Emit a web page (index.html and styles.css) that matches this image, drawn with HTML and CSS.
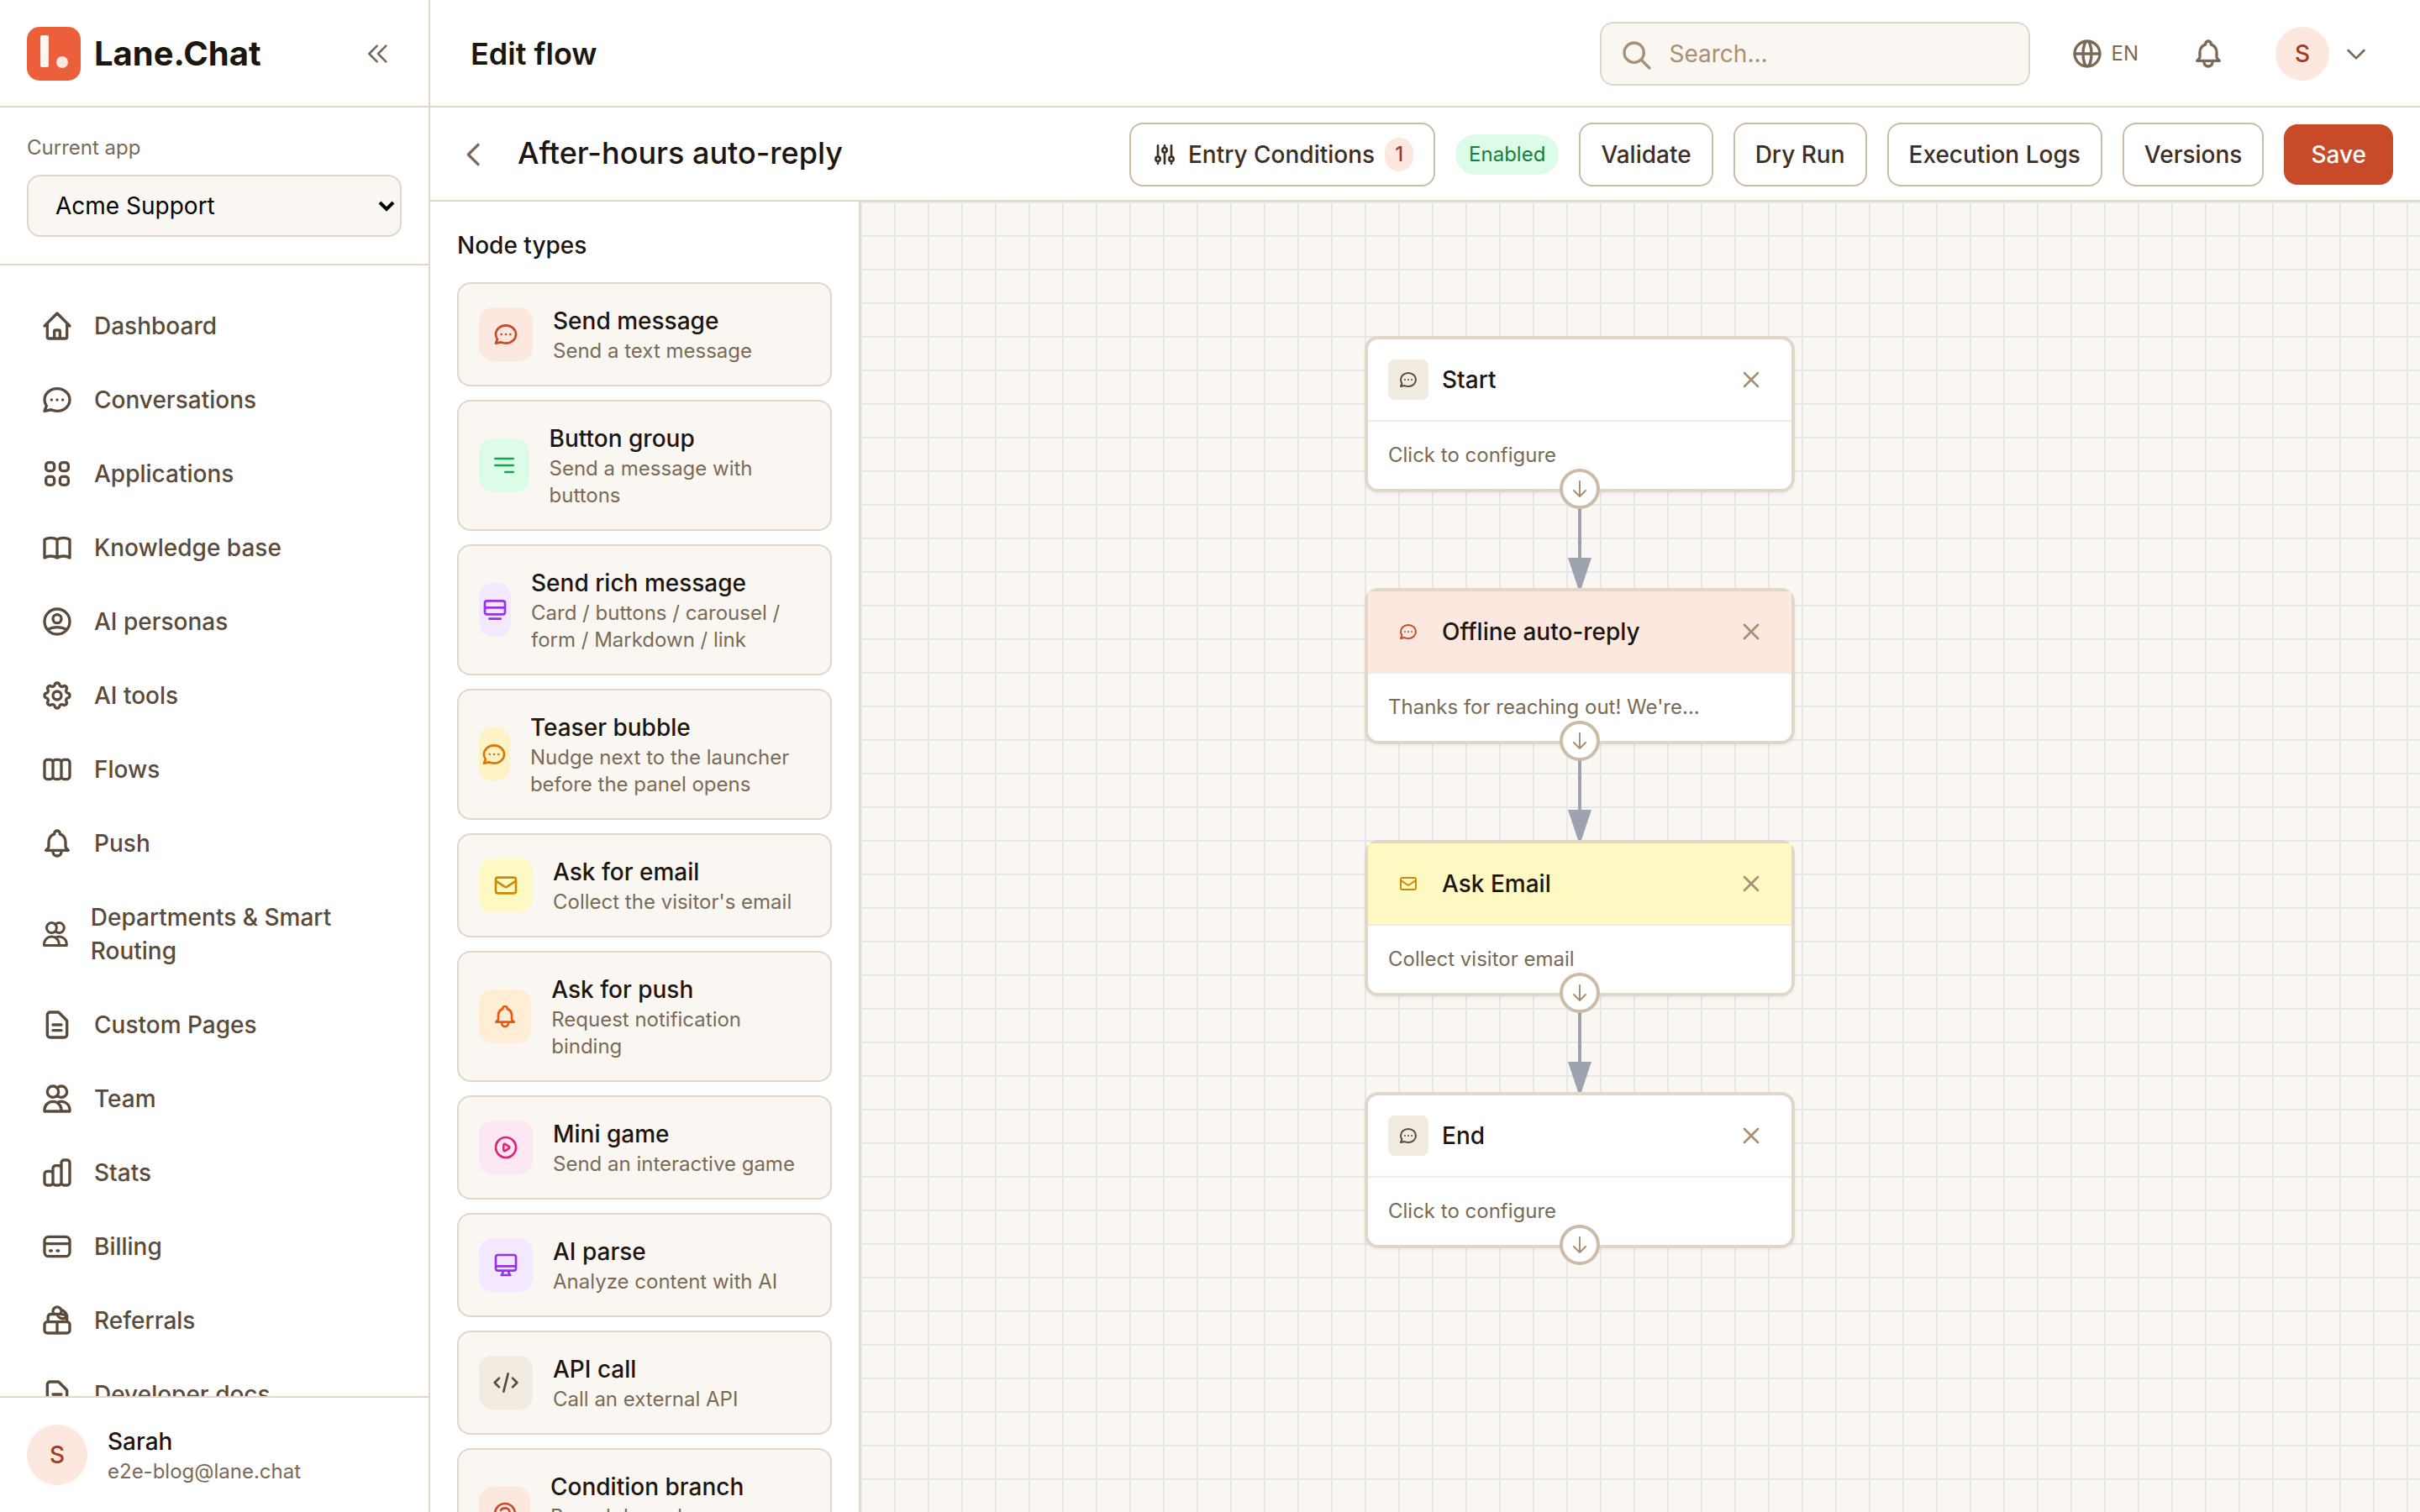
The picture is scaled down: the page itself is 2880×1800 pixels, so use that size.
FILE: index.html
```html
<!DOCTYPE html>
<html lang="en">
<head>
<meta charset="utf-8">
<title>Edit flow - Lane.Chat</title>
<link rel="stylesheet" href="styles.css">
</head>
<body>
<svg class="sprite" aria-hidden="true">
  <symbol id="home" viewBox="0 0 24 24"><path d="M3 12l2-2m0 0l7-7 7 7M5 10v10a1 1 0 001 1h3m10-11l2 2m-2-2v10a1 1 0 01-1 1h-3m-6 0a1 1 0 001-1v-4a1 1 0 011-1h2a1 1 0 011 1v4a1 1 0 001 1m-6 0h6"/></symbol>
  <symbol id="chat" viewBox="0 0 24 24"><path d="M8 12h.01M12 12h.01M16 12h.01M21 12c0 4.418-4.03 8-9 8a9.863 9.863 0 01-4.255-.949L3 20l1.395-3.72C3.512 15.042 3 13.574 3 12c0-4.418 4.03-8 9-8s9 3.582 9 8z"/></symbol>
  <symbol id="grid" viewBox="0 0 24 24"><path d="M4 6a2 2 0 012-2h2a2 2 0 012 2v2a2 2 0 01-2 2H6a2 2 0 01-2-2V6zM14 6a2 2 0 012-2h2a2 2 0 012 2v2a2 2 0 01-2 2h-2a2 2 0 01-2-2V6zM4 16a2 2 0 012-2h2a2 2 0 012 2v2a2 2 0 01-2 2H6a2 2 0 01-2-2v-2zM14 16a2 2 0 012-2h2a2 2 0 012 2v2a2 2 0 01-2 2h-2a2 2 0 01-2-2v-2z"/></symbol>
  <symbol id="book" viewBox="0 0 24 24"><path d="M12 6.253v13m0-13C10.832 5.477 9.246 5 7.5 5S4.168 5.477 3 6.253v13C4.168 18.477 5.754 18 7.5 18s3.332.477 4.5 1.253m0-13C13.168 5.477 14.754 5 16.5 5c1.747 0 3.332.477 4.5 1.253v13C19.832 18.477 18.247 18 16.5 18c-1.746 0-3.332.477-4.5 1.253"/></symbol>
  <symbol id="persona" viewBox="0 0 24 24"><path d="M5.121 17.804A13.937 13.937 0 0112 16c2.5 0 4.847.655 6.879 1.804M15 10a3 3 0 11-6 0 3 3 0 016 0zm6 2a9 9 0 11-18 0 9 9 0 0118 0z"/></symbol>
  <symbol id="cog" viewBox="0 0 24 24"><path d="M10.325 4.317c.426-1.756 2.924-1.756 3.35 0a1.724 1.724 0 002.573 1.066c1.543-.94 3.31.826 2.37 2.37a1.724 1.724 0 001.065 2.572c1.756.426 1.756 2.924 0 3.35a1.724 1.724 0 00-1.066 2.573c.94 1.543-.826 3.31-2.37 2.37a1.724 1.724 0 00-2.572 1.065c-.426 1.756-2.924 1.756-3.35 0a1.724 1.724 0 00-2.573-1.066c-1.543.94-3.31-.826-2.37-2.37a1.724 1.724 0 00-1.065-2.572c-1.756-.426-1.756-2.924 0-3.35a1.724 1.724 0 001.066-2.573c-.94-1.543.826-3.31 2.37-2.37.996.608 2.296.07 2.572-1.065zM15 12a3 3 0 11-6 0 3 3 0 016 0z"/></symbol>
  <symbol id="boards" viewBox="0 0 24 24"><path d="M9 17V7m0 10a2 2 0 01-2 2H5a2 2 0 01-2-2V7a2 2 0 012-2h2a2 2 0 012 2m0 10a2 2 0 002 2h2a2 2 0 002-2M9 7a2 2 0 012-2h2a2 2 0 012 2m0 10V7m0 10a2 2 0 002 2h2a2 2 0 002-2V7a2 2 0 00-2-2h-2a2 2 0 00-2 2"/></symbol>
  <symbol id="bell" viewBox="0 0 24 24"><path d="M15 17h5l-1.405-1.405A2.032 2.032 0 0118 14.158V11a6.002 6.002 0 00-4-5.659V5a2 2 0 10-4 0v.341C7.67 6.165 6 8.388 6 11v3.159c0 .538-.214 1.055-.595 1.436L4 17h5m6 0v1a3 3 0 11-6 0v-1m6 0H9"/></symbol>
  <symbol id="users" viewBox="0 0 24 24"><path d="M12 4.354a4 4 0 110 5.292M15 21H3v-1a6 6 0 0112 0v1zm0 0h6v-1a6 6 0 00-9-5.197M13 7a4 4 0 11-8 0 4 4 0 018 0z"/></symbol>
  <symbol id="doc" viewBox="0 0 24 24"><path d="M9 12h6m-6 4h6m2 5H7a2 2 0 01-2-2V5a2 2 0 012-2h5.586a1 1 0 01.707.293l5.414 5.414a1 1 0 01.293.707V19a2 2 0 01-2 2z"/></symbol>
  <symbol id="bars" viewBox="0 0 24 24"><path d="M9 19v-6a2 2 0 00-2-2H5a2 2 0 00-2 2v6a2 2 0 002 2h2a2 2 0 002-2zm0 0V9a2 2 0 012-2h2a2 2 0 012 2v10m-6 0a2 2 0 002 2h2a2 2 0 002-2m0 0V5a2 2 0 012-2h2a2 2 0 012 2v14a2 2 0 01-2 2h-2a2 2 0 01-2-2z"/></symbol>
  <symbol id="card" viewBox="0 0 24 24"><path d="M3 10h18M7 15h1m4 0h1m-7 4h12a3 3 0 003-3V8a3 3 0 00-3-3H6a3 3 0 00-3 3v8a3 3 0 003 3z"/></symbol>
  <symbol id="gift" viewBox="0 0 24 24"><path d="M12 13v8M5 13h14a2 2 0 012 2v4a2 2 0 01-2 2H5a2 2 0 01-2-2v-4a2 2 0 012-2zM5.500 13V9.500a2 2 0 012-2h4.500M9.500 7A3 3 0 1114.500 7M14.800 4.300C17 5 19 7 19 9v4M12 7.500c1.500 4 6 4 7 1.300-2-1.300-4.500-1.600-7-1.300z"/></symbol>
  <symbol id="lines" viewBox="0 0 24 24"><path d="M4 6h16M4 12h16m-7 6h7"/></symbol>
  <symbol id="rich" viewBox="0 0 24 24"><path d="M3 10h18M5 4h14a2 2 0 012 2v8a2 2 0 01-2 2H5a2 2 0 01-2-2V6a2 2 0 012-2zM7 20h10"/></symbol>
  <symbol id="mail" viewBox="0 0 24 24"><path d="M3 8l7.890 5.260a2 2 0 002.220 0L21 8M5 19h14a2 2 0 002-2V7a2 2 0 00-2-2H5a2 2 0 00-2 2v10a2 2 0 002 2z"/></symbol>
  <symbol id="play" viewBox="0 0 24 24"><path d="M14.752 11.168l-3.197-2.132A1 1 0 0010 9.870v4.263a1 1 0 001.555.832l3.197-2.132a1 1 0 000-1.664zM21 12a9 9 0 11-18 0 9 9 0 0118 0z"/></symbol>
  <symbol id="monitor" viewBox="0 0 24 24"><path d="M9.750 17L9 20l-1 1h8l-1-1-.750-3M3 13h18M5 17h14a2 2 0 002-2V5a2 2 0 00-2-2H5a2 2 0 00-2 2v10a2 2 0 002 2z"/></symbol>
  <symbol id="code" viewBox="0 0 24 24"><path d="M10 20l4-16m4 4l4 4-4 4M6 16l-4-4 4-4"/></symbol>
  <symbol id="question" viewBox="0 0 24 24"><path d="M8.228 9c.549-1.165 2.030-2 3.772-2 2.210 0 4 1.343 4 3 0 1.400-1.278 2.575-3.006 2.907-.542.104-.994.540-.994 1.093m0 3h.01M21 12a9 9 0 11-18 0 9 9 0 0118 0z"/></symbol>
  <symbol id="search" viewBox="0 0 24 24"><path d="M21 21l-6-6m2-5a7 7 0 11-14 0 7 7 0 0114 0z"/></symbol>
  <symbol id="globe" viewBox="0 0 24 24"><path d="M21 12a9 9 0 01-9 9m9-9a9 9 0 00-9-9m9 9H3m9 9a9 9 0 01-9-9m9 9c1.657 0 3-4.030 3-9s-1.343-9-3-9m0 18c-1.657 0-3-4.030-3-9s1.343-9 3-9m-9 9a9 9 0 019-9"/></symbol>
  <symbol id="down" viewBox="0 0 24 24"><path d="M19 9l-7 7-7-7"/></symbol>
  <symbol id="left" viewBox="0 0 24 24"><path d="M15 19l-7-7 7-7"/></symbol>
  <symbol id="dleft" viewBox="0 0 24 24"><path d="M11 19l-7-7 7-7m8 14l-7-7 7-7"/></symbol>
  <symbol id="close" viewBox="0 0 24 24"><path d="M6 18L18 6M6 6l12 12"/></symbol>
  <symbol id="arrow" viewBox="0 0 24 24"><path d="M19 14l-7 7m0 0l-7-7m7 7V3"/></symbol>
  <symbol id="sliders" viewBox="0 0 24 24"><path d="M12 6V4m0 2a2 2 0 100 4m0-4a2 2 0 110 4m-6 8a2 2 0 100-4m0 4a2 2 0 110-4m0 4v2m0-6V4m6 6v10m6-2a2 2 0 100-4m0 4a2 2 0 110-4m0 4v2m0-6V4"/></symbol>
</svg>

<aside class="sidebar">
  <div class="brand">
    <svg class="logo" viewBox="0 0 64 64" aria-hidden="true"><rect width="64" height="64" rx="15" fill="#eb5f3a"/><rect x="16" y="10" width="10" height="38" rx="2" fill="#fff5ee"/><circle cx="42" cy="42" r="7" fill="#fce8de"/></svg>
    <span class="brand-name">Lane.Chat</span>
    <button class="icon-btn collapse" aria-label="Collapse sidebar"><svg class="i32"><use href="#dleft"/></svg></button>
  </div>
  <div class="app-switch">
    <label for="app">Current app</label>
    <div class="select-wrap">
      <select id="app"><option>Acme Support</option></select>
      <svg class="caret" viewBox="0 0 20 14" aria-hidden="true"><path d="M2 3l8 8 8-8"/></svg>
    </div>
  </div>
  <nav class="nav">
    <a href="#"><span class="ico"><svg><use href="#home"/></svg></span><span>Dashboard</span></a>
    <a href="#"><span class="ico"><svg><use href="#chat"/></svg></span><span>Conversations</span></a>
    <a href="#"><span class="ico"><svg><use href="#grid"/></svg></span><span>Applications</span></a>
    <a href="#"><span class="ico"><svg><use href="#book"/></svg></span><span>Knowledge base</span></a>
    <a href="#"><span class="ico"><svg><use href="#persona"/></svg></span><span>AI personas</span></a>
    <a href="#"><span class="ico"><svg><use href="#cog"/></svg></span><span>AI tools</span></a>
    <a href="#"><span class="ico"><svg><use href="#boards"/></svg></span><span>Flows</span></a>
    <a href="#"><span class="ico"><svg><use href="#bell"/></svg></span><span>Push</span></a>
    <a href="#"><span class="ico"><svg><use href="#users"/></svg></span><span>Departments &amp; Smart Routing</span></a>
    <a href="#"><span class="ico"><svg><use href="#doc"/></svg></span><span>Custom Pages</span></a>
    <a href="#"><span class="ico"><svg><use href="#users"/></svg></span><span>Team</span></a>
    <a href="#"><span class="ico"><svg><use href="#bars"/></svg></span><span>Stats</span></a>
    <a href="#"><span class="ico"><svg><use href="#card"/></svg></span><span>Billing</span></a>
    <a href="#"><span class="ico"><svg><use href="#gift"/></svg></span><span>Referrals</span></a>
    <a href="#"><span class="ico"><svg><use href="#doc"/></svg></span><span>Developer docs</span></a>
  </nav>
  <div class="account">
    <span class="avatar large">S</span>
    <div>
      <div class="account-name">Sarah</div>
      <div class="account-mail">e2e-blog@lane.chat</div>
    </div>
  </div>
</aside>

<div class="main">
  <header class="topbar">
    <h1>Edit flow</h1>
    <div class="search">
      <svg class="i40"><use href="#search"/></svg>
      <input type="search" placeholder="Search..." aria-label="Search">
    </div>
    <button class="lang"><svg class="i40"><use href="#globe"/></svg>EN</button>
    <button class="icon-btn bell" aria-label="Notifications"><svg class="i40"><use href="#bell"/></svg></button>
    <button class="user" aria-label="Account menu"><span class="avatar">S</span><svg class="i32"><use href="#down"/></svg></button>
  </header>

  <div class="toolbar">
    <button class="icon-btn back" aria-label="Back"><svg class="i40"><use href="#left"/></svg></button>
    <h2>After-hours auto-reply</h2>
    <div class="actions">
      <button class="btn"><svg class="i32"><use href="#sliders"/></svg>Entry Conditions<span class="count">1</span></button>
      <span class="status">Enabled</span>
      <button class="btn">Validate</button>
      <button class="btn">Dry Run</button>
      <button class="btn">Execution Logs</button>
      <button class="btn">Versions</button>
      <button class="btn-primary">Save</button>
    </div>
  </div>

  <div class="work">
    <section class="palette">
      <h3>Node types</h3>
      <ul>
        <li><span class="tile coral"><svg class="i32"><use href="#chat"/></svg></span><div><strong>Send message</strong><p>Send a text message</p></div></li>
        <li><span class="tile green"><svg class="i32"><use href="#lines"/></svg></span><div><strong>Button group</strong><p>Send a message with buttons</p></div></li>
        <li><span class="tile purple"><svg class="i32"><use href="#rich"/></svg></span><div><strong>Send rich message</strong><p>Card / buttons / carousel / form / Markdown / link</p></div></li>
        <li><span class="tile amber"><svg class="i32"><use href="#chat"/></svg></span><div><strong>Teaser bubble</strong><p>Nudge next to the launcher before the panel opens</p></div></li>
        <li><span class="tile yellow"><svg class="i32"><use href="#mail"/></svg></span><div><strong>Ask for email</strong><p>Collect the visitor's email</p></div></li>
        <li><span class="tile orange"><svg class="i32"><use href="#bell"/></svg></span><div><strong>Ask for push</strong><p>Request notification binding</p></div></li>
        <li><span class="tile pink"><svg class="i32"><use href="#play"/></svg></span><div><strong>Mini game</strong><p>Send an interactive game</p></div></li>
        <li><span class="tile purple"><svg class="i32"><use href="#monitor"/></svg></span><div><strong>AI parse</strong><p>Analyze content with AI</p></div></li>
        <li><span class="tile sand"><svg class="i32"><use href="#code"/></svg></span><div><strong>API call</strong><p>Call an external API</p></div></li>
        <li><span class="tile coral"><svg class="i32"><use href="#question"/></svg></span><div><strong>Condition branch</strong><p>Branch based on a condition</p></div></li>
      </ul>
    </section>

    <section class="canvas" aria-label="Flow canvas">
      <svg class="edges" aria-hidden="true">
        <g fill="#9ca3af">
          <path d="M854 342h4v82h12l-12 36h-4l-12-36h12z"/>
          <path d="M854 642h4v82h12l-12 36h-4l-12-36h12z"/>
          <path d="M854 942h4v82h12l-12 36h-4l-12-36h12z"/>
        </g>
      </svg>
      <article class="node" style="left:600px;top:160px">
        <header><span class="mini sand"><svg class="i24"><use href="#chat"/></svg></span><h4>Start</h4><button class="icon-btn" aria-label="Remove Start"><svg class="i32"><use href="#close"/></svg></button></header>
        <p>Click to configure</p>
        <button class="port" aria-label="Connect Start"><svg class="i24"><use href="#arrow"/></svg></button>
      </article>
      <article class="node" style="left:600px;top:460px">
        <header class="coral"><span class="mini coral"><svg class="i24"><use href="#chat"/></svg></span><h4>Offline auto-reply</h4><button class="icon-btn" aria-label="Remove Offline auto-reply"><svg class="i32"><use href="#close"/></svg></button></header>
        <p>Thanks for reaching out! We're...</p>
        <button class="port" aria-label="Connect Offline auto-reply"><svg class="i24"><use href="#arrow"/></svg></button>
      </article>
      <article class="node" style="left:600px;top:760px">
        <header class="yellow"><span class="mini yellow"><svg class="i24"><use href="#mail"/></svg></span><h4>Ask Email</h4><button class="icon-btn" aria-label="Remove Ask Email"><svg class="i32"><use href="#close"/></svg></button></header>
        <p>Collect visitor email</p>
        <button class="port" aria-label="Connect Ask Email"><svg class="i24"><use href="#arrow"/></svg></button>
      </article>
      <article class="node" style="left:600px;top:1060px">
        <header><span class="mini sand"><svg class="i24"><use href="#chat"/></svg></span><h4>End</h4><button class="icon-btn" aria-label="Remove End"><svg class="i32"><use href="#close"/></svg></button></header>
        <p>Click to configure</p>
        <button class="port" aria-label="Connect End"><svg class="i24"><use href="#arrow"/></svg></button>
      </article>
    </section>
  </div>
</div>
</body>
</html>
```

FILE: styles.css
```css
:root {
  --ink: #1c1510;
  --ink-soft: #3d2f24;
  --nav: #5a4a3a;
  --muted: #7a6a55;
  --faint: #a69076;
  --line: #e2d6c8;
  --line-strong: #cbbba7;
  --paper: #faf7f2;
  --coral-bg: #fce8de;
  --coral: #c84a28;
  --coral-dark: #a8391c;
}
* { box-sizing: border-box; margin: 0; padding: 0; }
body {
  display: flex;
  height: 100vh;
  overflow: hidden;
  background: #fff;
  color: var(--ink);
  font: 400 28px/40px Inter, "Liberation Sans", sans-serif;
}
button, input, select { font: inherit; color: inherit; }
button { background: none; border: 0; cursor: pointer; }
h1, h2, h3, h4, strong { font-weight: 500; }
ul { list-style: none; }
svg { display: block; fill: none; stroke: currentColor; stroke-width: 2; stroke-linecap: round; stroke-linejoin: round; }
.sprite { position: absolute; width: 0; height: 0; }
.i24 { width: 24px; height: 24px; flex-shrink: 0; }
.i32 { width: 32px; height: 32px; flex-shrink: 0; }
.i40 { width: 40px; height: 40px; flex-shrink: 0; }
.icon-btn { padding: 8px; color: var(--muted); }

/* Sidebar */
.sidebar { display: flex; flex-direction: column; flex: 0 0 512px; border-right: 2px solid var(--line); }
.brand { display: flex; align-items: center; gap: 16px; height: 128px; padding: 2px 32px 0; border-bottom: 2px solid var(--line); flex-shrink: 0; }
.logo { width: 64px; height: 64px; stroke: none; }
.brand-name { font-size: 40px; font-weight: 700; line-height: 56px; }
.collapse { margin-left: auto; padding: 12px; }
.app-switch { padding: 32px; border-bottom: 2px solid var(--line); }
.app-switch label { display: block; margin-bottom: 16px; font-size: 24px; line-height: 32px; color: var(--muted); }
.select-wrap { position: relative; }
select { display: block; width: 100%; height: 74px; padding: 0 48px 0 32px; border: 2px solid var(--line); border-radius: 16px; background: var(--paper); color: #000; appearance: none; }
.caret { position: absolute; right: 8px; top: 30px; width: 20px; height: 14px; stroke: #000; stroke-width: 4; stroke-linecap: butt; stroke-linejoin: miter; pointer-events: none; }
.nav { display: flex; flex-direction: column; gap: 8px; flex: 1; min-height: 0; padding: 32px 24px; overflow-y: auto; scrollbar-width: none; }
.nav a { display: flex; align-items: center; gap: 24px; flex-shrink: 0; padding: 20px 24px; border-radius: 16px; color: var(--nav); font-weight: 500; text-decoration: none; }
.ico { width: 40px; min-width: 0; }
.ico svg { width: 100%; height: 40px; }
.account { display: flex; align-items: center; gap: 24px; padding: 32px; border-top: 2px solid var(--line); }
.account-name { font-weight: 500; }
.account-mail { font-size: 24px; line-height: 32px; color: var(--muted); }
.avatar { display: grid; place-items: center; width: 64px; height: 64px; border-radius: 50%; background: var(--coral-bg); color: var(--coral-dark); font-weight: 500; }
.avatar.large { width: 72px; height: 72px; }

/* Top bar */
.main { display: flex; flex-direction: column; flex: 1; min-width: 0; }
.topbar { display: flex; align-items: center; height: 128px; padding: 2px 48px 0; border-bottom: 2px solid var(--line); flex-shrink: 0; }
h1 { margin-right: auto; font-size: 36px; font-weight: 600; line-height: 56px; }
.search { position: relative; width: 512px; color: var(--faint); }
.search svg { position: absolute; left: 24px; top: 20px; }
.search input { display: block; width: 100%; height: 76px; padding: 0 32px 0 80px; border: 2px solid var(--line); border-radius: 16px; background: var(--paper); color: var(--ink); appearance: none; }
.search input::placeholder { color: var(--faint); opacity: 1; }
.lang { display: flex; align-items: center; gap: 8px; margin-left: 48px; color: var(--muted); font-size: 24px; line-height: 32px; }
.bell { margin-left: 55px; }
.user { display: flex; align-items: center; gap: 16px; margin: 0 12px 0 52px; color: var(--muted); }

/* Flow toolbar */
.toolbar { display: flex; align-items: center; padding: 18px 32px 16px; border-bottom: 2px solid var(--line); }
.back { padding: 0; }
h2 { margin: 0 auto 0 32px; padding-bottom: 4px; font-size: 36px; line-height: 56px; }
.actions { display: flex; align-items: center; gap: 24px; }
.btn { display: flex; align-items: center; gap: 12px; height: 76px; padding: 0 24px; border: 2px solid var(--line-strong); border-radius: 16px; color: var(--ink-soft); font-weight: 500; }
.btn-primary { height: 72px; padding: 0 32px; border-radius: 16px; background: var(--coral); color: #fff; font-weight: 500; }
.count { padding: 4px 12px; border-radius: 20px; background: var(--coral-bg); color: var(--coral-dark); font-size: 24px; line-height: 32px; }
.status { padding: 8px 16px; border-radius: 24px; background: #dcfce7; color: #15803d; font-size: 24px; line-height: 32px; }

/* Palette */
.work { display: flex; flex: 1; min-height: 0; }
.palette { flex: 0 0 512px; padding: 32px; border-right: 2px solid var(--line); overflow-y: auto; scrollbar-width: none; }
h3 { margin-bottom: 24px; font-size: 28px; line-height: 40px; }
.palette ul { display: grid; gap: 16px; }
.palette li { display: flex; align-items: center; gap: 24px; padding: 24px; border: 2px solid var(--line); border-radius: 16px; background: var(--paper); cursor: grab; }
.palette strong { display: block; }
.palette p { font-size: 24px; line-height: 32px; color: var(--muted); }
.tile { display: flex; align-items: center; justify-content: center; width: 64px; height: 64px; border-radius: 16px; }
.coral { background: var(--coral-bg); color: var(--coral); }
.green { background: #dcfce7; color: #16a34a; }
.purple { background: #f3e8ff; color: #9333ea; }
.amber { background: #fef3c7; color: #d97706; }
.yellow { background: #fef9c3; color: #ca8a04; }
.orange { background: #ffedd5; color: #ea580c; }
.pink { background: #fce7f3; color: #db2777; }
.sand { background: #f2ebe2; color: var(--nav); }

/* Canvas */
.canvas {
  position: relative;
  flex: 1;
  overflow: hidden;
  background-color: var(--paper);
  background-image: linear-gradient(#e5e7eb 2px, transparent 2px), linear-gradient(90deg, #e5e7eb 2px, transparent 2px);
  background-size: 40px 40px;
}
.edges { position: absolute; inset: 0; width: 100%; height: 100%; stroke: none; }
.node { position: absolute; width: 512px; border: 4px solid var(--line); border-radius: 16px; background: #fff; box-shadow: 0 2px 4px rgba(0, 0, 0, .05); }
.node header { display: flex; align-items: center; gap: 16px; padding: 24px; border-bottom: 2px solid #f2ebe2; }
.node h4 { color: var(--ink); font-size: 28px; }
.node .icon-btn { margin-left: auto; color: var(--faint); }
.node p { padding: 24px; font-size: 24px; line-height: 32px; color: var(--muted); }
.mini { display: grid; place-items: center; width: 48px; height: 48px; border-radius: 8px; }
.port { position: absolute; left: 50%; bottom: -24px; display: grid; place-items: center; width: 48px; height: 48px; margin-left: -24px; border: 4px solid var(--line-strong); border-radius: 50%; background: #fff; color: var(--faint); }
```
